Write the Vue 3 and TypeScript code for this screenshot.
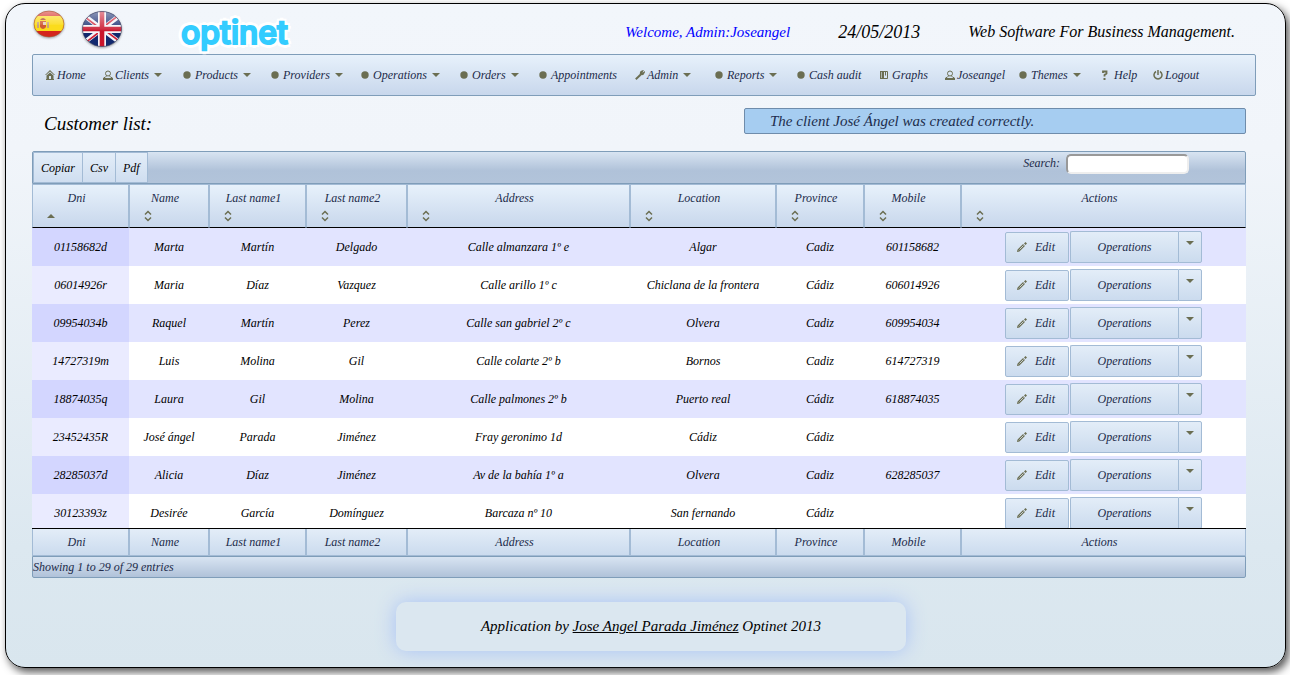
<script setup lang="ts">
import { ref } from 'vue'

interface MenuItem { label: string; icon: string; menu?: boolean }
interface Column { label: string; width: number }

const menu: MenuItem[] = [
  { label: 'Home', icon: 'home' },
  { label: 'Clients', icon: 'person', menu: true },
  { label: 'Products', icon: 'bullet', menu: true },
  { label: 'Providers', icon: 'bullet', menu: true },
  { label: 'Operations', icon: 'bullet', menu: true },
  { label: 'Orders', icon: 'bullet', menu: true },
  { label: 'Appointments', icon: 'bullet' },
  { label: 'Admin', icon: 'wrench', menu: true },
  { label: 'Reports', icon: 'bullet', menu: true },
  { label: 'Cash audit', icon: 'bullet' },
  { label: 'Graphs', icon: 'note' },
  { label: 'Joseangel', icon: 'person' },
  { label: 'Themes', icon: 'bullet', menu: true },
  { label: 'Help', icon: 'help' },
  { label: 'Logout', icon: 'power' },
]

const columns: Column[] = [
  { label: 'Dni', width: 97 },
  { label: 'Name', width: 80 },
  { label: 'Last name1', width: 97 },
  { label: 'Last name2', width: 101 },
  { label: 'Address', width: 223 },
  { label: 'Location', width: 146 },
  { label: 'Province', width: 88 },
  { label: 'Mobile', width: 97 },
  { label: 'Actions', width: 285 },
]
const total = columns.reduce((sum, c) => sum + c.width, 0)
const share = (c: Column) => ({ width: `${(c.width / total) * 100}%` })

const rows: string[][] = [
  ['01158682d', 'Marta', 'Martín', 'Delgado', 'Calle almanzara 1º e', 'Algar', 'Cadiz', '601158682'],
  ['06014926r', 'Maria', 'Díaz', 'Vazquez', 'Calle arillo 1º c', 'Chiclana de la frontera', 'Cádiz', '606014926'],
  ['09954034b', 'Raquel', 'Martín', 'Perez', 'Calle san gabriel 2º c', 'Olvera', 'Cadiz', '609954034'],
  ['14727319m', 'Luis', 'Molina', 'Gil', 'Calle colarte 2º b', 'Bornos', 'Cadiz', '614727319'],
  ['18874035q', 'Laura', 'Gil', 'Molina', 'Calle palmones 2º b', 'Puerto real', 'Cádiz', '618874035'],
  ['23452435R', 'José ángel', 'Parada', 'Jiménez', 'Fray geronimo 1d', 'Cádiz', 'Cádiz', ''],
  ['28285037d', 'Alicia', 'Díaz', 'Jiménez', 'Av de la bahía 1º a', 'Olvera', 'Cadiz', '628285037'],
  ['30123393z', 'Desirée', 'García', 'Domínguez', 'Barcaza nº 10', 'San fernando', 'Cádiz', ''],
]
const search = ref('')
</script>

<template>
  <div class="page">
    <header class="top">
      <div class="flags">
        <button type="button" class="flag" aria-label="Español">
          <svg width="32" height="28" viewBox="0 0 32 28">
            <defs>
              <clipPath id="es"><ellipse cx="16" cy="14" rx="15" ry="13" /></clipPath>
              <linearGradient id="gloss" x1="0" y1="0" x2="0" y2="1">
                <stop offset="0" stop-color="#fff" stop-opacity=".55" />
                <stop offset=".5" stop-color="#fff" stop-opacity=".12" />
                <stop offset=".55" stop-color="#fff" stop-opacity="0" />
              </linearGradient>
            </defs>
            <g clip-path="url(#es)">
              <rect width="32" height="28" fill="#d4251c" />
              <rect y="6" width="32" height="15" fill="#fbdc1c" />
              <path d="M4 12h2v6H4zM14 12h2v6h-2z" fill="#c9a27c" />
              <path d="M7 11h6v6q-3 4-6 0z" fill="#cf5a35" />
              <path d="M7 10q3-4 6 0z" fill="#a8452a" />
              <path d="M10 12h3v3h-3z" fill="#e6d0c0" />
              <rect width="32" height="28" fill="url(#gloss)" />
            </g>
            <ellipse cx="16" cy="14" rx="15" ry="13" fill="none" stroke="#a05a30" stroke-opacity=".55" />
          </svg>
        </button>
        <button type="button" class="flag" aria-label="English">
          <svg width="42" height="38" viewBox="0 0 42 38">
            <defs><clipPath id="uk"><ellipse cx="21" cy="19" rx="19.5" ry="17.5" /></clipPath></defs>
            <g clip-path="url(#uk)">
              <rect width="42" height="38" fill="#12296e" />
              <path d="M0 3 42 35M42 3 0 35" stroke="#f2f2f6" stroke-width="4.600" />
              <path d="M0 4 21 20M21 18 42 34M42 2 21 18M21 20 0 36" stroke="#cf1f35" stroke-width="1.600" />
              <path d="M21 0v38M0 19h42" stroke="#f4f4f8" stroke-width="8" />
              <path d="M21 0v38M0 19h42" stroke="#c9142b" stroke-width="4.600" />
              <rect width="42" height="38" fill="url(#gloss)" />
            </g>
            <ellipse cx="21" cy="19" rx="19.5" ry="17.5" fill="none" stroke="#3a4060" stroke-opacity=".6" />
          </svg>
        </button>
      </div>
      <div class="logo">optinet</div>
      <div class="status">
        <span class="welcome">Welcome, Admin:Joseangel</span>
        <time class="date">24/05/2013</time>
        <span class="slogan">Web Software For Business Management.</span>
      </div>
    </header>

    <nav class="menu">
      <a v-for="item in menu" :key="item.label" href="#" class="entry">
        <span class="slot">
          <svg v-if="item.icon === 'home'" width="10" height="10" viewBox="0 0 10 10" fill="#6b6e52">
            <path d="M5 0 10 5H9L5 1.500 1 5H0zM5 2.500 8.500 5.500V9H9v1H1V9h.500V5.500zM4 6v3h2V6z" fill-rule="evenodd" />
          </svg>
          <svg v-else-if="item.icon === 'person'" width="10" height="10" viewBox="0 0 10 10" fill="none" stroke="#6b6e52">
            <circle cx="5" cy="3.500" r="2.500" /><path d="M3.500 6 2 7.500H1V9H9V7.500H8L6.500 6" /><path d="M0 9h10" stroke-width="2" />
          </svg>
          <svg v-else-if="item.icon === 'wrench'" width="10" height="10" viewBox="0 0 10 10" fill="none" stroke="#6b6e52">
            <path d="M.800 9.200 5.500 4.800" stroke-width="2" /><path d="M7.800.800Q5 1 5.500 4.500 8.500 5 9.300 2.300L7.500 3.500 6.500 2.800z" stroke-width="1.200" fill="#6b6e52" />
          </svg>
          <svg v-else-if="item.icon === 'note'" width="9" height="10" viewBox="0 0 9 10">
            <path d="M0 1h4v8H0z" fill="#6b6e52" /><path d="M1.500 2v6" stroke="#dce8f4" stroke-width=".6" />
            <path d="M3.500 1.500h4v7h-4zM5.500 1.500v4" fill="none" stroke="#6b6e52" />
          </svg>
          <svg v-else-if="item.icon === 'help'" width="6" height="10" viewBox="0 0 6 10">
            <path d="M1 3V1.500H4.500V3.500L2.500 5V6.500" fill="none" stroke="#6b6e52" stroke-width="1.800" /><path d="M1.500 8h2v2h-2z" fill="#6b6e52" />
          </svg>
          <svg v-else-if="item.icon === 'power'" width="10" height="10" viewBox="0 0 10 10" fill="none" stroke="#6b6e52" stroke-width="1.500">
            <path d="M3 1.500A4 4 0 1 0 7 1.500M5 0v5" />
          </svg>
          <svg v-else width="8" height="8" viewBox="0 0 8 8"><circle cx="4" cy="4" r="3.700" fill="#6b6e52" /></svg>
        </span>
        <span>{{ item.label }}</span>
        <i v-if="item.menu" class="caret"></i>
      </a>
    </nav>

    <main class="content">
      <div class="heading">
        <h1>Customer list:</h1>
        <p class="notice" role="status">The client José Ángel was created correctly.</p>
      </div>

      <div class="toolbar">
        <div class="exports">
          <button type="button">Copiar</button>
          <button type="button">Csv</button>
          <button type="button">Pdf</button>
        </div>
        <div class="search">
          <label for="search">Search:</label>
          <input id="search" v-model="search" type="text" />
        </div>
      </div>

      <table class="head">
        <colgroup><col v-for="c in columns" :key="c.label" :style="share(c)" /></colgroup>
        <thead>
          <tr>
            <th v-for="(c, i) in columns" :key="c.label" scope="col">
              {{ c.label }}
              <svg class="sort" width="16" height="16" viewBox="0 0 16 16">
                <path v-if="i === 0" d="M4 10 8 6l4 4z" fill="#6b6e52" />
                <path v-else d="M5 6.500 8 3.500 11 6.500M5 9.500 8 12.500l3-3" fill="none" stroke="#6b6e52" stroke-width="1.500" />
              </svg>
            </th>
          </tr>
        </thead>
      </table>

      <div class="scroll">
        <table class="body">
          <colgroup><col v-for="c in columns" :key="c.label" :style="share(c)" /></colgroup>
          <tbody>
            <tr v-for="row in rows" :key="row[0]">
              <td v-for="(value, i) in row" :key="i">{{ value }}</td>
              <td>
                <div class="actions">
                  <button type="button" class="edit">
                    <svg width="10" height="10" viewBox="0 0 10 10">
                      <path d="M1.500 8.500 7 3" stroke="#6b6e52" stroke-width="2.600" />
                      <path d="M2.500 7.500 6.500 3.500" stroke="#dce8f4" stroke-width=".8" />
                      <path d="M7 1.500 8.500 0 10 1.500 8.500 3zM0 10l.500-2.500L2.500 9.500z" fill="#6b6e52" />
                    </svg>
                    Edit
                  </button>
                  <button type="button" class="operations">Operations</button>
                  <button type="button" class="more" aria-label="More operations"><i class="caret"></i></button>
                </div>
              </td>
            </tr>
          </tbody>
        </table>
      </div>

      <table class="foot">
        <colgroup><col v-for="c in columns" :key="c.label" :style="share(c)" /></colgroup>
        <tfoot>
          <tr><th v-for="c in columns" :key="c.label" scope="col">{{ c.label }}</th></tr>
        </tfoot>
      </table>
      <div class="info">Showing 1 to 29 of 29 entries</div>
    </main>

    <footer class="bottom">
      <div class="credits">Application by <a href="#">Jose Angel Parada Jiménez</a> Optinet 2013</div>
    </footer>
  </div>
</template>

<style>
body {
  background: #fff;
}
</style>

<style scoped>
* {
  box-sizing: border-box;
}
.page {
  margin: 3px 4px 7px 5px;
  padding: 0 29px 16px 26px;
  border: 1px solid #000;
  border-radius: 20px;
  background: linear-gradient(#f2f6fb, #f1f5fa 22%, #dce8f0 82%, #d9e6ee);
  box-shadow: 3px 4px 8px #555;
  font: italic 12px/16px "Liberation Serif", serif;
  color: #000;
}
button,
input {
  font: inherit;
  color: inherit;
}
.top {
  display: flex;
  height: 50px;
}
.flags {
  display: flex;
  align-items: flex-start;
  width: 149px;
  padding-top: 6px;
  padding-left: 1px;
  gap: 16px;
}
.flag {
  padding: 0;
  border: 0;
  background: none;
  line-height: 0;
}
.flag svg {
  filter: drop-shadow(0 1px 1px rgba(0, 0, 0, .35));
}
.logo {
  padding-top: 10px;
  font: 500 32px/38px Inter, sans-serif;
  color: #33ccff;
  -webkit-text-stroke: 2px #33ccff;
  text-shadow: 4px 0 #fff, -4px 0 #fff, 0 4px #fff, 0 -4px #fff, 3px 3px #fff, -3px 3px #fff, 3px -3px #fff, -3px -3px #fff;
}
.status {
  display: flex;
  align-items: center;
  gap: 48px;
  height: 56px;
  margin-left: auto;
  padding-right: 21px;
  font-size: 15px;
}
.welcome {
  color: #00f;
}
.date {
  font-size: 18px;
}
.slogan {
  font-size: 16px;
}
.menu {
  display: grid;
  grid-template-columns: 58fr 80fr 88fr 90fr 99fr 79fr 96fr 80fr 82fr 83fr 65fr 74fr 83fr 51fr 102fr;
  align-items: center;
  height: 42px;
  padding-left: 12px;
  border: 1px solid #7f9db9;
  border-radius: 2px;
  background: linear-gradient(#e7f1fb, #c8d7ec);
}
.entry {
  display: flex;
  align-items: center;
  min-width: 0;
  white-space: nowrap;
  color: #222b4a;
  text-decoration: none;
}
.slot {
  display: flex;
  flex: 0 0 12px;
}
.caret {
  width: 0;
  border: 4px solid transparent;
  border-top-color: #6b6e52;
  border-bottom: 0;
}
.entry .caret {
  margin-left: 5px;
}
.content {
  margin-right: 10px;
}
.heading {
  display: flex;
  justify-content: space-between;
  align-items: flex-start;
  height: 55px;
  padding-top: 12px;
  padding-left: 12px;
}
h1 {
  margin: 0;
  font-size: 19px;
  font-weight: 400;
  line-height: 32px;
}
.notice {
  flex: 0 0 502px;
  margin: 0;
  padding-left: 25px;
  border: 1px solid #6f8cab;
  border-radius: 2px;
  background: #a6cdf1;
  color: #1d2d4d;
  font-size: 15px;
  line-height: 24px;
}
.toolbar {
  display: flex;
  justify-content: space-between;
  height: 33px;
  border: 1px solid #7f9db9;
  border-radius: 2px 2px 0 0;
  background: linear-gradient(#d8e4f2, #b0c2d9 60%, #b2c4da);
}
.exports {
  display: flex;
}
.exports button {
  padding: 0 7px;
  border: 1px solid #a3bbd5;
  border-left-width: 0;
  background: linear-gradient(#e3edf8, #cfdef0);
}
.exports button:first-child {
  border-left-width: 1px;
}
.search {
  display: flex;
  align-items: flex-start;
  gap: 6px;
  padding: 2px 56px 0 0;
  color: #222b4a;
  line-height: 19px;
}
.search input {
  width: 123px;
  height: 20px;
  padding: 0 4px;
  border: 2px solid;
  border-color: #999 #eee #eee #999;
  border-radius: 5px;
  background: #fff;
}
table {
  width: 100%;
  table-layout: fixed;
  border-collapse: separate;
  border-spacing: 0;
}
th {
  border: 1px solid #a3bbd5;
  color: #222b4a;
  font-weight: 400;
}
.head th {
  height: 44px;
  padding: 5px 18px 3px 10px;
  border-bottom-color: #000;
  background: linear-gradient(#e7f1fb, #c8d7ec);
}
.sort {
  display: block;
  margin-top: 2px;
}
.scroll {
  height: 301px;
  overflow: hidden;
  border-bottom: 1px solid #000;
}
.body td {
  height: 38px;
  padding: 0;
  background: #fff;
  text-align: center;
}
.body td:first-child {
  background: #eaebff;
}
.body tr:nth-child(odd) td {
  background: #e2e4ff;
}
.body tr:nth-child(odd) td:first-child {
  background: #d3d6ff;
}
.actions {
  display: flex;
  justify-content: center;
  align-items: flex-end;
}
.actions button {
  height: 32px;
  padding: 0;
  border: 1px solid #a3bbd5;
  border-radius: 2px;
  background: linear-gradient(#e3edf8, #cbdbee);
  color: #222b4a;
}
.actions .edit {
  display: flex;
  align-items: center;
  justify-content: center;
  gap: 8px;
  width: 64px;
  height: 31px;
  padding: 0 2px 1px 0;
  margin-right: 1px;
}
.actions .operations {
  width: 108px;
  border-right: 0;
  border-radius: 2px 0 0 2px;
}
.actions .more {
  display: flex;
  justify-content: center;
  width: 24px;
  padding-top: 9px;
  border-radius: 0 2px 2px 0;
}
.foot th {
  height: 27px;
  padding: 0 18px 0 10px;
  border-top: 0;
  background: linear-gradient(#e3edf8, #cbdbee);
}
.info {
  height: 22px;
  border: 1px solid #7f9db9;
  border-radius: 0 0 2px 2px;
  background: linear-gradient(#d8e4f2, #b0c2d9);
  color: #222b4a;
  line-height: 20px;
}
.bottom {
  padding: 24px 0 0 14px;
}
.credits {
  width: 510px;
  max-width: 100%;
  margin: 0 auto;
  padding: 12px 0 13px;
  border-radius: 10px;
  background: #dbe7f0;
  box-shadow: 0 0 20px #a9c2f5;
  font-size: 15px;
  line-height: 24px;
  text-align: center;
}
.credits a {
  color: inherit;
}
</style>
